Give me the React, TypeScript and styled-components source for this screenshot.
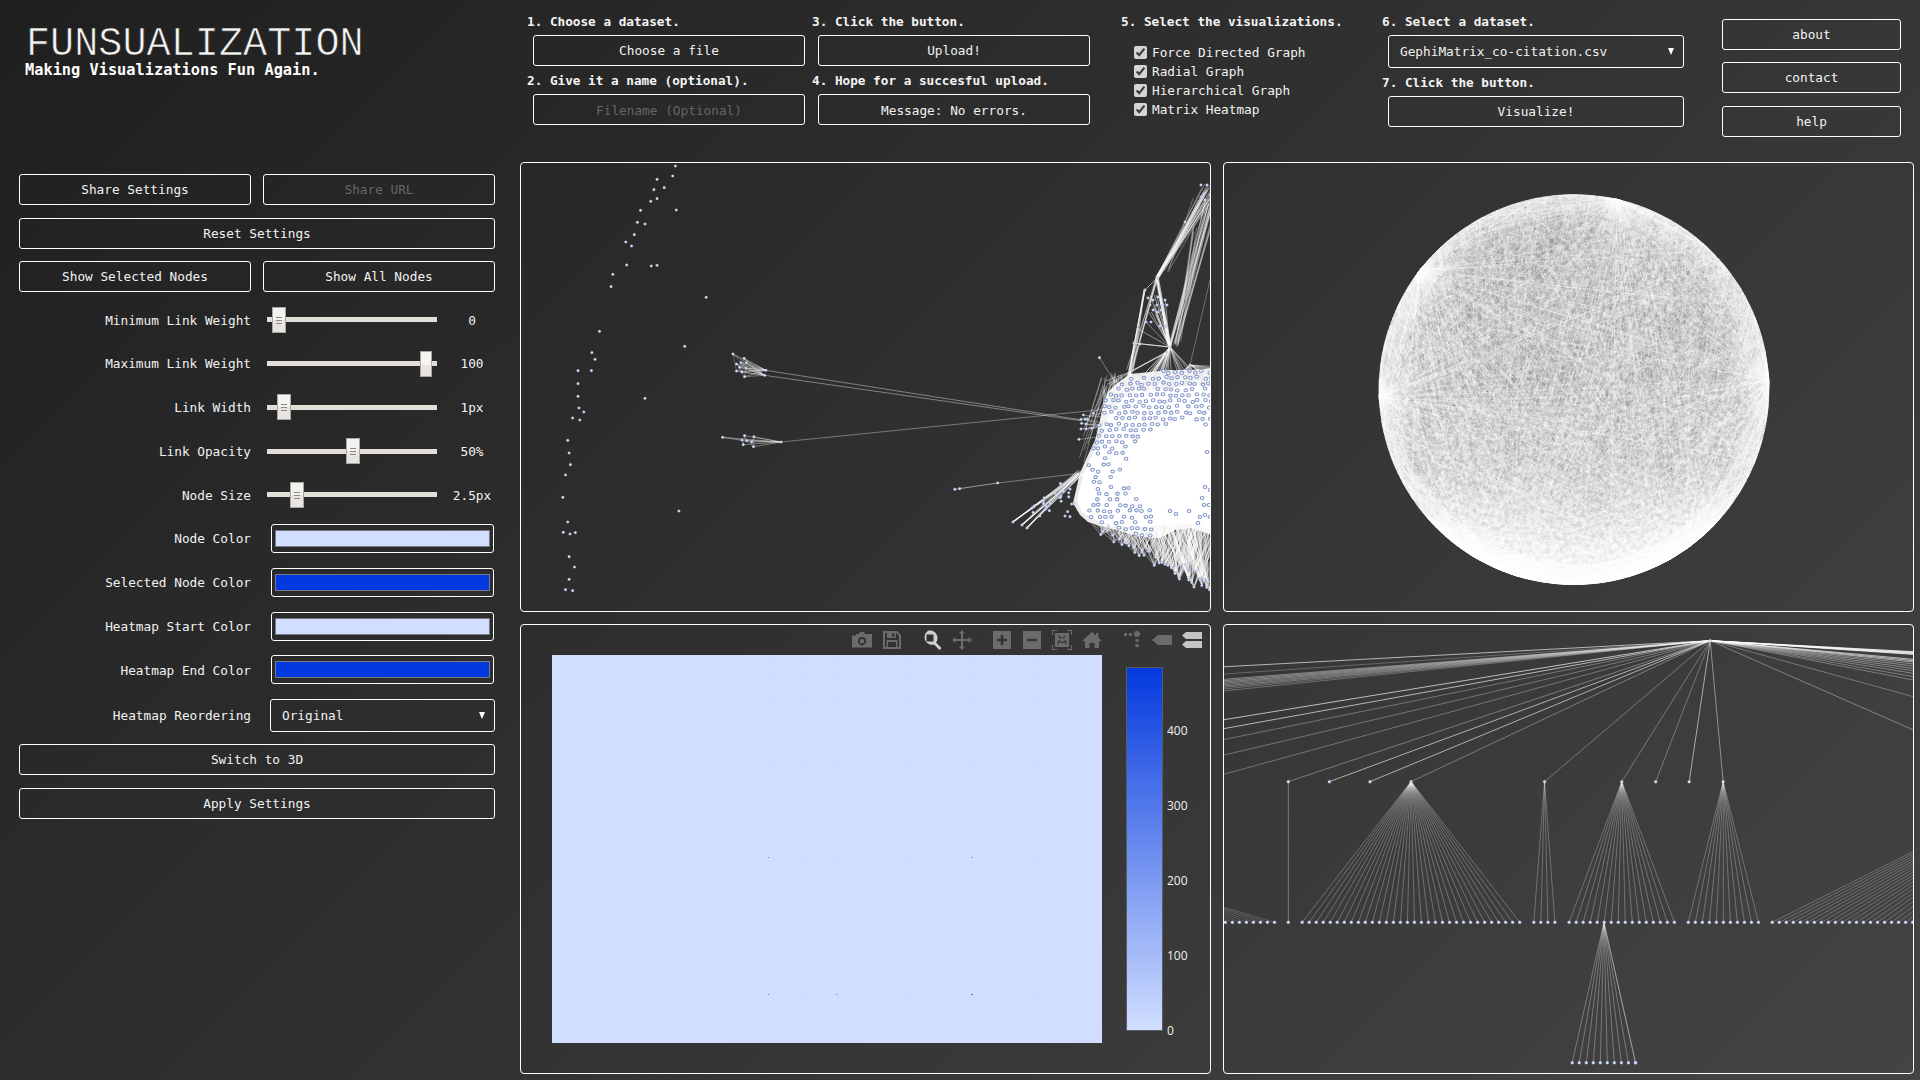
import React from "react";
import styled, { createGlobalStyle, css } from "styled-components";

/* ---------- seeded random + drawing data ---------- */
const makeRng = (seed: number) => () => {
  seed |= 0;
  seed = (seed + 0x6d2b79f5) | 0;
  let t = Math.imul(seed ^ (seed >>> 15), 1 | seed);
  t = (t + Math.imul(t ^ (t >>> 7), 61 | t)) ^ t;
  return ((t ^ (t >>> 14)) >>> 0) / 4294967296;
};
type P = [number, number];
type Seg = { a: P; b: P; o: number; w?: number };
const fz = (x: number, y: number): P => [520 + x / 2.24, 160 + y / 3];
const hz = (x: number, y: number): P => [1220 + x / 2.24, 620 + y / 3];
const z12 = (x: number, y: number): P => [1000 + x / 3, 380 + y / 3];
const inPoly = (p: P, poly: P[]) => {
  let c = false;
  for (let i = 0, j = poly.length - 1; i < poly.length; j = i++) {
    const [xi, yi] = poly[i];
    const [xj, yj] = poly[j];
    if (yi > p[1] !== yj > p[1] && p[0] < ((xj - xi) * (p[1] - yi)) / (yj - yi) + xi) c = !c;
  }
  return c;
};

/* force graph */
const forceData = (() => {
  const r = makeRng(11);
  const segs: Seg[] = [];
  const dots: P[] = [];
  const rings: P[] = [];
  const add = (a: P, b: P, o: number, w = 0.8) => segs.push({ a, b, o, w });
  const bundle = (a: P, b: P, n: number, sa: number, sb: number, o: number) => {
    for (let i = 0; i < n; i++) {
      add(
        [a[0] + (r() - 0.5) * sa, a[1] + (r() - 0.5) * sa],
        [b[0] + (r() - 0.5) * sb, b[1] + (r() - 0.5) * sb],
        o,
      );
    }
  };
  const scatter: [number, number][] = [
    [348, 18], [342, 48], [307, 58], [323, 83], [300, 89], [307, 116], [293, 124], [350, 150], [270, 151], [263, 187],
    [280, 192], [256, 224], [237, 246], [250, 258], [239, 315], [294, 318], [307, 316], [208, 343], [204, 380], [417, 412],
    [178, 514], [369, 559], [161, 578], [168, 598], [130, 632], [160, 632], [130, 671], [130, 709], [280, 715], [132, 744],
    [143, 756], [118, 774], [134, 780], [107, 841], [110, 879], [113, 914], [102, 945], [96, 1012], [356, 1053], [107, 1086],
    [97, 1117], [112, 1122], [124, 1118], [110, 1190], [122, 1221], [110, 1258], [102, 1289], [118, 1292],
  ];
  scatter.forEach(([x, y]) => dots.push(fz(x, y)));

  const clusterA: P[] = ([[477, 582], [502, 595], [485, 612], [495, 608], [507, 608], [492, 622], [506, 624], [485, 633], [497, 636], [503, 650]] as P[]).map(
    ([x, y]) => fz(x, y),
  );
  const a1 = fz(551, 631);
  const a2 = fz(548, 646);
  clusterA.forEach((p, i) => {
    add(p, a1, 0.45);
    add(p, a2, 0.45);
    add(p, clusterA[(i + 3) % clusterA.length], 0.3);
    dots.push(p);
  });
  dots.push(a1, a2);
  add(a1, fz(1260, 780), 0.5);
  add(a2, fz(1255, 782), 0.5);

  const clusterB: P[] = ([[454, 832], [503, 827], [524, 830], [497, 840], [508, 842], [519, 846], [500, 854], [523, 860]] as P[]).map(([x, y]) => fz(x, y));
  const b1 = fz(585, 846);
  clusterB.forEach((p, i) => {
    add(p, b1, 0.45);
    add(p, clusterB[(i + 3) % clusterB.length], 0.3);
    dots.push(p);
  });
  dots.push(b1);
  add(b1, fz(1310, 748), 0.45);

  dots.push(fz(974, 988), fz(985, 986), fz(1070, 969), fz(1298, 593), fz(1332, 665));
  add(fz(974, 988), fz(1070, 969), 0.65);
  add(fz(1070, 969), fz(1255, 940), 0.45);
  add(fz(1298, 593), fz(1332, 665), 0.45);

  /* spire */
  const A: P = [1157, 278];
  const B: P = [1145, 290];
  const C: P = [1170, 347];
  const D: P = [1167, 352];
  const E: P = [1130, 372];
  bundle([1206, 190], A, 16, 12, 3, 0.42);
  bundle([1212, 190], A, 14, 20, 3, 0.42);
  bundle([1200, 205], [1165, 268], 8, 16, 8, 0.38);
  bundle([1209, 205], C, 9, 8, 3, 0.48);
  bundle([1216, 195], [1176, 345], 10, 8, 5, 0.42);
  bundle([1196, 228], [1178, 342], 5, 8, 6, 0.38);
  bundle([1207, 200], [1188, 300], 3, 6, 12, 0.3);
  bundle(A, C, 8, 3, 3, 0.7);
  bundle(A, E, 6, 3, 8, 0.55);
  bundle(B, E, 7, 2, 8, 0.6);
  add(B, A, 0.7);
  bundle([1157, 305], C, 14, 20, 2, 0.6);
  const spireNodes: P[] = [
    [1201, 185], [1207, 185], [1201, 197], [1205, 200], [1210, 195], [1185, 222], [1187, 230], A, B,
    [1148, 298], [1153, 300], [1158, 297], [1165, 300], [1150, 305], [1157, 305], [1163, 305], [1167, 305], [1153, 310], [1158, 312], [1161, 310],
    [1146, 322], [1151, 322], [1160, 326], [1166, 326], [1138, 329], [1134, 343], [1140, 344], C, D, [1190, 365],
  ];
  spireNodes.forEach((p) => dots.push(p));
  add([1138, 329], C, 0.55);
  add([1134, 343], C, 0.7, 1.2);
  add([1140, 344], C, 0.6);
  add([1146, 322], C, 0.5);
  add(D, E, 0.85, 1.4);
  add([1138, 329], E, 0.5);
  add([1134, 343], E, 0.6);
  add([1210, 280], [1190, 365], 0.38);
  for (let i = 0; i < 36; i++) add(C, [1140 + r() * 60, 372 + r() * 12], 0.55);
  for (let i = 0; i < 14; i++) add(E, [1105 + r() * 45, 378 + r() * 22], 0.55);
  for (let i = 0; i < 8; i++) add([1190, 365], [1211, 364 + r() * 16], 0.6);
  for (let i = 0; i < 10; i++) add([1190, 365], [1160 + r() * 40, 382 + r() * 14], 0.55);

  /* small cluster to the left of the blob */
  const small: P[] = ([[250, 105], [262, 118], [280, 100], [243, 118], [255, 118], [245, 130], [258, 132], [243, 147], [258, 147], [275, 145], [237, 178]] as P[]).map(
    ([x, y]) => z12(x, y),
  );
  small.forEach((p) => {
    dots.push(p);
    add(p, [1100 + r() * 8, p[1] + (r() - 0.5) * 14], 0.45);
  });

  /* spur, lower left */
  const sp1: P = [1080, 473];
  bundle(sp1, [1013, 522], 12, 7, 1, 0.5);
  bundle(sp1, [1022, 525], 10, 7, 1, 0.5);
  bundle(sp1, [1027, 528], 10, 7, 1, 0.5);
  dots.push([1013, 522], [1022, 525], [1027, 528]);
  for (let i = 0; i < 26; i++) {
    const t = 0.2 + r() * 0.6;
    const j = (r() - 0.5) * 18;
    dots.push([1080 - 58 * t + j * 0.6, 478 + 44 * t + j * 0.7]);
  }
  dots.push(z12(195, 408), z12(210, 410), z12(203, 395), z12(215, 372), z12(222, 372));

  /* blob */
  const outer: P[] = [
    [1105, 400], [1108, 392], [1115, 385], [1130, 374], [1150, 372], [1170, 370], [1190, 370], [1212, 368], [1212, 535],
    [1190, 528], [1175, 530], [1160, 538], [1150, 538], [1137, 536], [1117, 530], [1100, 526], [1088, 522], [1080, 515], [1073, 503], [1076, 490], [1080, 473], [1088, 455], [1095, 440], [1099, 425], [1102, 410],
  ];
  const bottomRim: P[] = [];
  for (let x = 1100; x < 1212; x += 3) {
    const base = x < 1155 ? 533 + (x - 1100) * 0.55 : 563 + (x - 1155) * 0.42;
    bottomRim.push([x + (r() - 0.5) * 3, base + (r() - 0.5) * 9 - (r() < 0.4 ? 8 : 0)]);
  }
  bottomRim.push(z12(525, 580), z12(538, 597), z12(582, 621), z12(566, 600), z12(600, 600), z12(620, 622));
  bottomRim.forEach((p) => {
    dots.push(p);
    const n = p[0] > 1150 ? 9 : 6;
    for (let i = 0; i < n; i++) add(p, [p[0] + (r() - 0.5) * 76, 495 + r() * 30], 0.5, 0.8);
  });
  for (let i = 0; i < 260; i++) {
    const x = 1100 + r() * 112;
    add([x, 372 + r() * 20], [x + (r() - 0.5) * 50, 410 + r() * 60], 0.4);
  }
  for (let x = 1090; x < 1212; x += 6.6) {
    for (let y = 372; y < 540; y += 5.8) {
      const p: P = [x + (r() - 0.5) * 3 + (Math.round(y / 5.8) % 2) * 2.5, y + (r() - 0.5) * 2.2];
      if (!inPoly(p, outer)) continue;
      const dx = (p[0] - 1185) / 60;
      const dy = (p[1] - 470) / 48;
      if (dx * dx + dy * dy < 1) continue;
      if (p[0] > 1155 && p[1] > 445) continue;
      if (r() < (p[1] < 450 ? 0.95 : 0.62)) rings.push(p);
    }
  }
  ([[1207, 452], [1205, 487], [1210, 490], [1202, 498], [1204, 505], [1209, 505], [1200, 517], [1205, 515], [1170, 511], [1176, 514], [1189, 511], [1198, 523], [1210, 517]] as P[]).forEach(
    (p) => rings.push(p),
  );
  const core: P[] = [
    [1112, 408], [1130, 392], [1212, 384], [1212, 530], [1190, 524], [1160, 525], [1135, 528], [1100, 522], [1082, 512], [1077, 500], [1084, 472], [1098, 442],
  ];
  return { segs, dots, rings, outer, core };
})();

/* radial graph */
const CX = 1574;
const CY = 389.5;
const R = 195;
const radial = (() => {
  const r = makeRng(42);
  const onRim = (t: number): P => [CX + R * Math.cos(t), CY + R * Math.sin(t)];
  const angleOf = (x: number, y: number) => Math.atan2(y - CY, x - CX);
  const hubs = [[1617, 200], [1423, 273], [1477, 550], [1517, 575], [1663, 550], [1683, 540], [1380, 397], [1767, 380]].map(([x, y]) => angleOf(x, y));
  const batches: { d: string; o: number; w: number }[] = [];
  const chord = (a: number, b: number) => {
    const p = onRim(a);
    const q = onRim(b);
    return `M${p[0].toFixed(1)} ${p[1].toFixed(1)}L${q[0].toFixed(1)} ${q[1].toFixed(1)}`;
  };
  const bottomBiased = () => {
    const t = r() * Math.PI * 2;
    return r() < 0.3 ? Math.PI * 0.5 + (r() - 0.5) * 1.7 : t;
  };
  for (let i = 0; i < 240; i++) {
    let d = "";
    for (let k = 0; k < 20; k++) d += chord(bottomBiased(), bottomBiased());
    batches.push({ d, o: 0.2, w: 0.65 });
  }
  hubs.forEach((h, idx) => {
    for (let i = 0; i < 14; i++) {
      let d = "";
      for (let k = 0; k < (idx < 2 ? 16 : 13); k++) d += chord(h + (r() - 0.5) * 0.035, r() * Math.PI * 2);
      batches.push({ d, o: 0.26, w: 0.7 });
    }
  });
  for (let i = 0; i < 70; i++) {
    const h = hubs[Math.floor(r() * hubs.length)];
    batches.push({ d: chord(h, r() * Math.PI * 2), o: 0.42, w: 1 });
  }
  return batches;
})();

/* hierarchical graph */
const tree = (() => {
  const L1Y = 485;
  const L2Y = 907;
  const L3Y = 1328;
  const root = hz(1098, 62);
  const segs: Seg[] = [];
  const dots: P[] = [root];
  const parents: [number, number][] = [
    [153, 0.42], [245, 0.75], [336, 0.75], [428, 0.42], [727, 0.38], [900, 0.38], [976, 0.38], [1051, 0.7], [1127, 0.55],
  ];
  parents.forEach(([x, o]) => {
    dots.push(hz(x, L1Y));
    segs.push({ a: root, b: hz(x, L1Y), o });
  });
  const leftEnds: [number, number][] = [
    [138, 0.8], [160, 0.3], [176, 0.5], [180, 0.5], [184, 0.5], [188, 0.45], [192, 0.4], [196, 0.4], [200, 0.4], [205, 0.35], [211, 0.35],
    [298, 0.85], [325, 0.8], [358, 0.38], [405, 0.38], [463, 0.38],
  ];
  leftEnds.forEach(([y, o]) => segs.push({ a: root, b: hz(0, y + 3), o }));
  const rightEnds: [number, number][] = [
    [95, 1], [97, 1], [99, 1], [101, 1], [103, 1], [118, 0.8], [122, 0.8], [126, 0.7], [132, 0.5], [138, 0.5], [145, 0.5], [152, 0.45], [160, 0.45], [170, 0.4], [180, 0.4], [230, 0.38], [330, 0.45],
  ];
  rightEnds.forEach(([y, o]) => segs.push({ a: root, b: hz(1553, y), o }));
  const fan = (px: number, py: number, start: number, n: number, y: number, o = 0.34) => {
    for (let i = 0; i < n; i++) {
      const x = start + i * 15.72;
      const p = hz(x, y);
      dots.push(p);
      segs.push({ a: hz(px, py), b: p, o });
    }
  };
  fan(-120, 810, 12, 8, L2Y, 0.22);
  fan(153, L1Y, 153, 1, L2Y, 0.45);
  fan(428, L1Y, 184, 32, L2Y);
  fan(727, L1Y, 703, 4, L2Y);
  fan(900, L1Y, 782, 16, L2Y);
  fan(1127, L1Y, 1049, 11, L2Y);
  fan(2050, 360, 1237, 21, L2Y, 0.3);
  fan(860, L2Y, 789, 10, L3Y, 0.38);
  dots.push(hz(931, L3Y));
  segs.push({ a: hz(860, L2Y), b: hz(931, L3Y), o: 0.38 });
  return { segs, dots };
})();

/* faint heatmap marks */
const heatMarks: P[] = (() => {
  const xs = [768, 800, 838, 907, 972, 1032];
  const ys = [659, 679, 700, 762, 857, 994];
  const out: P[] = [];
  xs.forEach((x) => ys.forEach((y) => out.push([x, y])));
  return out;
})();

/* ---------- styles ---------- */
const FONT = `"DejaVu Sans Mono", "Liberation Mono", monospace`;
const INK = "#f2f2f2";

const Global = createGlobalStyle`
  html, body { margin: 0; padding: 0; background: #2f2f2f; }
  * { box-sizing: border-box; }
`;

const outlined = css`
  border: 1px solid #fff;
  border-radius: 3px;
  background: transparent;
  color: ${INK};
  font: 12.75px/1 ${FONT};
  display: block;
  outline: none;
`;

const Page = styled.div`
  width: 1920px;
  height: 1080px;
  overflow: hidden;
  background: linear-gradient(135deg, #1f1f1f 0%, #444444 100%);
  color: ${INK};
  font: 12.75px/1 ${FONT};
`;

const Header = styled.header`
  display: flex;
  height: 162px;
`;

const Brand = styled.div`
  width: 527px;
  padding: 31px 0 0 25px;
`;

const Title = styled.h1`
  margin: 0;
  font: 400 40.2px/28px "Liberation Mono", monospace;
  color: #f4f4f4;
  padding-left: 1px;
  -webkit-text-stroke: 0.7px #222;
`;

const Tagline = styled.div`
  margin-top: 1px;
  font: 700 15.3px/20px ${FONT};
  color: #fff;
`;

const StepColumn = styled.div<{ $width: number }>`
  width: ${(p) => p.$width}px;
  padding-top: 14px;
  display: flex;
  flex-direction: column;
`;

const StepLabel = styled.div`
  font: 700 12.7px/16px ${FONT};
  color: #f4f4f4;
  white-space: pre;
`;

const ActionButton = styled.button`
  ${outlined}
  height: 31px;
  width: 100%;
  text-align: center;
  padding: 2px 0 0;
  &:disabled { color: #666; }
`;

const StepButton = styled(ActionButton)<{ $wide?: boolean }>`
  width: ${(p) => (p.$wide ? 296 : 272)}px;
  margin: 5px 0 7px 6px;
`;

const FilenameInput = styled.input`
  ${outlined}
  height: 31px;
  width: 272px;
  margin: 5px 0 7px 6px;
  padding: 2px 0 0;
  text-align: center;
  &::placeholder { color: #666; opacity: 1; }
`;

const MessageBox = styled.div`
  ${outlined}
  height: 31px;
  width: 272px;
  margin: 5px 0 7px 6px;
  line-height: 31px;
  text-align: center;
`;

const CheckList = styled.div`
  margin: 13px 0 0 13px;
  display: flex;
  flex-direction: column;
`;

const CheckRow = styled.label`
  height: 19px;
  display: flex;
  align-items: center;
  gap: 5px;
  color: ${INK};
`;

const CheckText = styled.span`
  padding-top: 2px;
`;

const CheckInput = styled.input`
  width: 13px;
  height: 13px;
  margin: 0;
  accent-color: #d4d4d4;
`;

const SelectWrap = styled.div<{ $width: number; $height: number }>`
  position: relative;
  width: ${(p) => p.$width}px;
  height: ${(p) => p.$height}px;
  &::after {
    content: "";
    position: absolute;
    right: 10px;
    top: 50%;
    margin-top: -4px;
    border-left: 3px solid transparent;
    border-right: 3px solid transparent;
    border-top: 7px solid #fff;
    pointer-events: none;
  }
`;

const DatasetWrap = styled(SelectWrap)`
  margin: 5px 0 7px 6px;
`;

const Select = styled.select`
  ${outlined}
  width: 100%;
  height: 100%;
  appearance: none;
  padding: 2px 0 0 11px;
  option { background: #222; }
`;

const LinkColumn = styled.nav`
  width: 179px;
  margin-left: 39px;
  padding-top: 19px;
  display: flex;
  flex-direction: column;
  gap: 12px;
  & > :last-child { margin-top: 1px; }
`;

const Body = styled.main`
  display: flex;
  height: 918px;
`;

const Sidebar = styled.aside`
  width: 476px;
  margin: 12px 25px 0 19px;
  display: flex;
  flex-direction: column;
`;

const ButtonPair = styled.div`
  display: grid;
  grid-template-columns: 232px 232px;
  gap: 12px;
`;

const SideStack = styled.div`
  display: flex;
  flex-direction: column;
  gap: 12.5px;
`;

const Settings = styled.div`
  margin-top: 6px;
  display: flex;
  flex-direction: column;
`;

const SettingRow = styled.div<{ $extra?: number }>`
  height: 43.75px;
  margin-top: ${(p) => p.$extra ?? 0}px;
  display: flex;
  align-items: center;
`;

const SettingLabel = styled.label`
  width: 232px;
  padding-top: 2px;
  text-align: right;
  color: ${INK};
  white-space: pre;
`;

const SliderTrack = styled.div`
  width: 170px;
  height: 26px;
  margin-left: 16px;
  padding: 0 5px;
  background: linear-gradient(#e2ded8, #e2ded8) center / 100% 5px no-repeat;
  display: flex;
`;

const grip = css`
  background:
    linear-gradient(#8c8a86, #8c8a86) center 9px / 6px 1px no-repeat,
    linear-gradient(#8c8a86, #8c8a86) center 12px / 6px 1px no-repeat,
    linear-gradient(#8c8a86, #8c8a86) center 15px / 6px 1px no-repeat,
    linear-gradient(#f4f2ef 50%, #e8e5e0 50%);
`;

const SliderInput = styled.input<{ $hover?: boolean }>`
  appearance: none;
  -webkit-appearance: none;
  width: 160px;
  height: 26px;
  margin: 0;
  background: transparent;
  &::-webkit-slider-thumb {
    -webkit-appearance: none;
    width: ${(p) => (p.$hover ? 12 : 14)}px;
    height: 26px;
    border: 1px solid #a8a6a2;
    ${(p) => (p.$hover ? "background: linear-gradient(#f6f4f1 55%, #e8e5e0 55%);" : grip)}
  }
`;

const SliderValue = styled.output`
  width: 46px;
  margin-left: 12px;
  padding-top: 2px;
  text-align: center;
  white-space: pre;
  color: ${INK};
`;

const ColorInput = styled.input`
  ${outlined}
  appearance: none;
  -webkit-appearance: none;
  width: 223px;
  height: 29px;
  margin-left: 20px;
  padding: 5px 3px;
  cursor: pointer;
  &::-webkit-color-swatch-wrapper { padding: 0; }
  &::-webkit-color-swatch { border: 1px solid #77797f; border-radius: 0; }
`;

const ReorderWrap = styled(SelectWrap)`
  margin-left: 19px;
`;

const FootStack = styled(SideStack)`
  margin-top: 6.5px;
  gap: 13px;
`;

const PanelGrid = styled.section`
  display: grid;
  grid-template-columns: 691px 691px;
  grid-template-rows: 450px 450px;
  gap: 12px;
`;

const Panel = styled.div`
  position: relative;
  border: 1px solid #fff;
  border-radius: 4px;
  overflow: hidden;
`;

const Chart = styled.svg`
  display: block;
  width: 100%;
  height: 100%;
`;

const ModeBar = styled.div`
  position: absolute;
  top: 5px;
  right: 8px;
  display: flex;
  gap: 20px;
`;

const ModeGroup = styled.div`
  display: flex;
  gap: 10px;
`;

const ModeIcon = styled.svg<{ $tone?: string }>`
  display: block;
  width: 20px;
  height: 20px;
  fill: ${(p) => p.$tone ?? "#6b6b6b"};
`;

const Tick = styled.text`
  font: 12px "Open Sans", "Liberation Sans", sans-serif;
  fill: #f0f0f0;
`;

/* ---------- small drawings ---------- */
const Segments = ({ segs }: { segs: Seg[] }) => (
  <g stroke="#fff" fill="none">
    {segs.map((s, i) => (
      <line
        key={i}
        x1={s.a[0]}
        y1={s.a[1]}
        x2={s.b[0]}
        y2={s.b[1]}
        strokeOpacity={s.o}
        strokeWidth={s.w ?? 0.8}
      />
    ))}
  </g>
);

const Dots = ({ dots, r = 1.3 }: { dots: P[]; r?: number }) => (
  <g fill="#dbe5ff" stroke="#8a97ba" strokeWidth={0.4}>
    {dots.map((d, i) => (
      <circle key={i} cx={d[0]} cy={d[1]} r={r} />
    ))}
  </g>
);

const pts = (poly: P[]) => poly.map((p) => p.join(",")).join(" ");

const ForceGraph = () => (
  <Chart viewBox="521 163 689 448" preserveAspectRatio="none">
    <polygon points={pts(forceData.outer)} fill="#e8e8e8" />
    <polygon points={pts(forceData.core)} fill="#fff" />
    <Segments segs={forceData.segs} />
    <polygon points="1140,410 1212,395 1212,520 1175,522 1120,515 1095,490 1105,450" fill="#fff" />
    <g fill="#fff" stroke="#7f93c9" strokeWidth={1.05}>
      {forceData.rings.map((p, i) => (
        <ellipse key={i} cx={p[0]} cy={p[1]} rx={1.8} ry={1.5} />
      ))}
    </g>
    <Dots dots={forceData.dots} />
  </Chart>
);

const RadialGraph = () => (
  <Chart viewBox="1224 163 689 448" preserveAspectRatio="none">
    <defs>
      <radialGradient id="rim">
        <stop offset="0.78" stopColor="#fff" stopOpacity="0" />
        <stop offset="1" stopColor="#fff" stopOpacity="0.3" />
      </radialGradient>
      <linearGradient id="lower" x1="0" y1="0" x2="0" y2="1">
        <stop offset="0.68" stopColor="#fff" stopOpacity="0" />
        <stop offset="1" stopColor="#fff" stopOpacity="0.5" />
      </linearGradient>
      <filter id="blotch" x="0" y="0" width="1" height="1">
        <feTurbulence type="fractalNoise" baseFrequency="0.22" numOctaves="2" seed="7" />
        <feColorMatrix type="matrix" values="0 0 0 0 0.1  0 0 0 0 0.1  0 0 0 0 0.1  2.6 0 0 0 -1.05" />
        <feComposite in2="SourceAlpha" operator="in" />
      </filter>
    </defs>
    <circle cx={CX} cy={CY} r={R} fill="#777" />
    <g fill="none" stroke="#fff">
      {radial.map((b, i) => (
        <path key={i} d={b.d} strokeOpacity={b.o} strokeWidth={b.w} />
      ))}
    </g>
    <circle cx={CX} cy={CY} r={R - 20} fill="#000" filter="url(#blotch)" opacity={0.22} />
    <circle cx={CX} cy={CY} r={R} fill="url(#rim)" />
    <circle cx={CX} cy={CY} r={R} fill="url(#lower)" />
  </Chart>
);

const Hierarchy = () => (
  <Chart viewBox="1224 625 689 448" preserveAspectRatio="none">
    <Segments segs={tree.segs} />
    <Dots dots={tree.dots} r={1.5} />
  </Chart>
);

const Heatmap = () => (
  <Chart viewBox="521 625 689 448" preserveAspectRatio="none">
    <defs>
      <linearGradient id="scale" x1="0" y1="0" x2="0" y2="1">
        <stop offset="0" stopColor="#0339de" />
        <stop offset="1" stopColor="#d1deff" />
      </linearGradient>
    </defs>
    <rect x={552} y={655} width={550} height={388} fill="#d1deff" />
    <g fill="#b7c6ee">
      {heatMarks.map((m, i) => (
        <rect key={i} x={m[0]} y={m[1]} width={1} height={1} />
      ))}
    </g>
    <g fill="#6f80ae">
      <rect x={768} y={857} width={1} height={1} />
      <rect x={971} y={857} width={1} height={1} />
      <rect x={768} y={994} width={1} height={1} />
      <rect x={836} y={994} width={1} height={1} />
      <rect x={971} y={994} width={2} height={1} />
    </g>
    <rect x={1126.5} y={667.5} width={36} height={363} fill="url(#scale)" stroke="#5a5d66" />
    {[
      ["400", 735],
      ["300", 810],
      ["200", 885],
      ["100", 960],
      ["0", 1035],
    ].map(([t, y]) => (
      <Tick key={t} x={1167} y={y}>
        {t}
      </Tick>
    ))}
  </Chart>
);

const ModeButtons = () => (
  <ModeBar>
    <ModeGroup>
      <ModeIcon viewBox="0 0 20 20">
        <path fillRule="evenodd" d="M0 5.500h4V4h3l1-2h4l1 2h7v13.500H0zM10 7a4.200 4.200 0 1 0 .01 0zM10 9a2.300 2.300 0 1 1-.01 0z" />
      </ModeIcon>
      <ModeIcon viewBox="0 0 20 20">
        <path fillRule="evenodd" d="M1 1h14l4 4v14H1zM3 3v14h1.500v-7h11v7H17V6l-2.500-3H14v5H5V3zM6 12v5h8v-5zM10 3.500v3h2.500v-3z" />
      </ModeIcon>
    </ModeGroup>
    <ModeGroup>
      <ModeIcon viewBox="0 0 20 20" $tone="#d0d0d0">
        <path fillRule="evenodd" d="M8 0.500a7.500 7.500 0 0 1 6 12l5.500 5.500-2 2-5.500-5.500a7.500 7.500 0 1 1-4-14.500zM4.500 4.500v7h7v-7z" />
      </ModeIcon>
      <ModeIcon viewBox="0 0 20 20">
        <path d="M10 0l3 3.500h-2v5.500h5.500v-2L20 10l-3.500 3v-2H11v5.500h2L10 20l-3-3.500h2V11H3.500v2L0 10l3.500-3v2H9V3.500H7z" />
      </ModeIcon>
    </ModeGroup>
    <ModeGroup>
      <ModeIcon viewBox="0 0 20 20">
        <path fillRule="evenodd" d="M1 1h18v18H1zM8.700 5v3.700H5v2.600h3.700V15h2.600v-3.700H15V8.700h-3.700V5z" />
      </ModeIcon>
      <ModeIcon viewBox="0 0 20 20">
        <path fillRule="evenodd" d="M1 1h18v18H1zM5 8.700v2.600h10V8.700z" />
      </ModeIcon>
      <ModeIcon viewBox="0 0 20 20">
        <path fillRule="evenodd" d="M0 0h5v1H1v4H0zM15 0h5v5h-1V1h-4zM0 15h1v4h4v1H0zM19 15h1v5h-5v-1h4zM3 3h14v14H3zM5 5l3 3-1.500 1.500L10 8l3.500 1.500L12 8l3-3-3 1.500L10 8 8 6.500zM5 15l3-3 2 1.500 2-1.500 3 3-1.500-5-3.500 2-3.500-2z" />
      </ModeIcon>
      <ModeIcon viewBox="0 0 20 20">
        <path d="M10 2l4 3.500V3h2.500v4.700L20 11h-3v7h-4.500v-5h-5v5H3v-7H0z" />
      </ModeIcon>
    </ModeGroup>
    <ModeGroup>
      <ModeIcon viewBox="0 0 20 20">
        <path d="M2 3h3v3H2zM7 3h3v3H7zM15 1a3 3 0 1 1 0 6 3 3 0 0 1 0-6zM13.500 9h3v3h-3zM13.500 14h3v3h-3z" />
      </ModeIcon>
      <ModeIcon viewBox="0 0 20 20">
        <path d="M0 10l6-5h14v10H6z" />
      </ModeIcon>
      <ModeIcon viewBox="0 0 20 20" $tone="#c4c4c4">
        <path d="M0 5.500L4 2h16v7H4zM0 14.500L4 11h16v7H4z" />
      </ModeIcon>
    </ModeGroup>
  </ModeBar>
);

/* ---------- page ---------- */
const sliders = [
  { label: "Minimum Link Weight", value: "0", pos: 0 },
  { label: "Maximum Link Weight", value: "100", pos: 1000, hover: true },
  { label: "Link Width", value: "1px", pos: 34 },
  { label: "Link Opacity", value: "50%", pos: 507 },
  { label: "Node Size", value: "2.5px", pos: 123 },
];

const colors = [
  { label: "Node Color", value: "#d1deff" },
  { label: "Selected Node Color", value: "#0339de" },
  { label: "Heatmap Start Color", value: "#d1deff" },
  { label: "Heatmap End Color", value: "#0339de" },
];

const visualizations = ["Force Directed Graph", "Radial Graph", "Hierarchical Graph", "Matrix Heatmap"];

export default function App() {
  return (
    <Page>
      <Global />
      <Header>
        <Brand>
          <Title>FUNSUALIZATION</Title>
          <Tagline>Making Visualizations Fun Again.</Tagline>
        </Brand>
        <StepColumn $width={285}>
          <StepLabel>1. Choose a dataset.</StepLabel>
          <StepButton>Choose a file</StepButton>
          <StepLabel>2. Give it a name (optional).</StepLabel>
          <FilenameInput placeholder="Filename (Optional)" />
        </StepColumn>
        <StepColumn $width={309}>
          <StepLabel>3. Click the button.</StepLabel>
          <StepButton>Upload!</StepButton>
          <StepLabel>4. Hope for a succesful upload.</StepLabel>
          <MessageBox>Message: No errors.</MessageBox>
        </StepColumn>
        <StepColumn $width={261}>
          <StepLabel>5. Select the visualizations.</StepLabel>
          <CheckList>
            {visualizations.map((v) => (
              <CheckRow key={v}>
                <CheckInput type="checkbox" defaultChecked />
                <CheckText>{v}</CheckText>
              </CheckRow>
            ))}
          </CheckList>
        </StepColumn>
        <StepColumn $width={301}>
          <StepLabel>6. Select a dataset.</StepLabel>
          <DatasetWrap $width={296} $height={33}>
            <Select defaultValue="GephiMatrix_co-citation.csv">
              <option>GephiMatrix_co-citation.csv</option>
            </Select>
          </DatasetWrap>
          <StepLabel>7. Click the button.</StepLabel>
          <StepButton $wide>Visualize!</StepButton>
        </StepColumn>
        <LinkColumn>
          <ActionButton>about</ActionButton>
          <ActionButton>contact</ActionButton>
          <ActionButton>help</ActionButton>
        </LinkColumn>
      </Header>
      <Body>
        <Sidebar>
          <SideStack>
            <ButtonPair>
              <ActionButton>Share Settings</ActionButton>
              <ActionButton disabled>Share URL</ActionButton>
            </ButtonPair>
            <ActionButton>Reset Settings</ActionButton>
            <ButtonPair>
              <ActionButton>Show Selected Nodes</ActionButton>
              <ActionButton>Show All Nodes</ActionButton>
            </ButtonPair>
          </SideStack>
          <Settings>
            {sliders.map((s) => (
              <SettingRow key={s.label}>
                <SettingLabel>{s.label}</SettingLabel>
                <SliderTrack>
                  <SliderInput type="range" min={0} max={1000} defaultValue={s.pos} $hover={s.hover} />
                </SliderTrack>
                <SliderValue>{s.value}</SliderValue>
              </SettingRow>
            ))}
            {colors.map((c) => (
              <SettingRow key={c.label}>
                <SettingLabel>{c.label}</SettingLabel>
                <ColorInput type="color" defaultValue={c.value} />
              </SettingRow>
            ))}
            <SettingRow $extra={2}>
              <SettingLabel>Heatmap Reordering</SettingLabel>
              <ReorderWrap $width={225} $height={33}>
                <Select defaultValue="Original">
                  <option>Original</option>
                </Select>
              </ReorderWrap>
            </SettingRow>
          </Settings>
          <FootStack>
            <ActionButton>Switch to 3D</ActionButton>
            <ActionButton>Apply Settings</ActionButton>
          </FootStack>
        </Sidebar>
        <PanelGrid>
          <Panel>
            <ForceGraph />
          </Panel>
          <Panel>
            <RadialGraph />
          </Panel>
          <Panel>
            <Heatmap />
            <ModeButtons />
          </Panel>
          <Panel>
            <Hierarchy />
          </Panel>
        </PanelGrid>
      </Body>
    </Page>
  );
}
